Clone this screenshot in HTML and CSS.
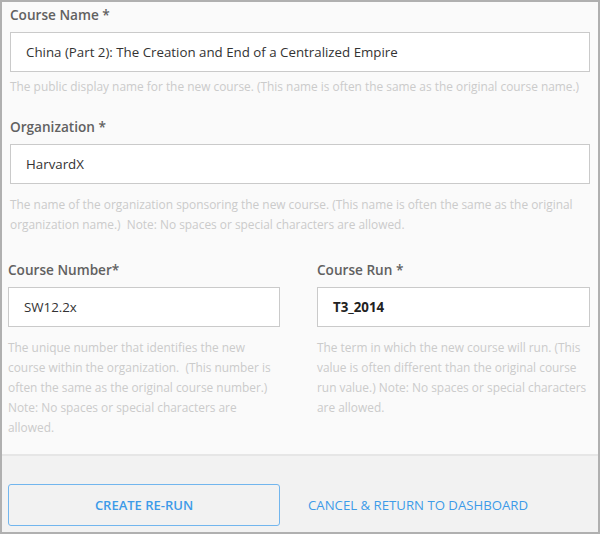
FILE: index.html
```html
<!DOCTYPE html>
<html lang="en">
<head>
<meta charset="utf-8">
<title>Course Re-run</title>
<link rel="stylesheet" href="styles.css">
</head>
<body>
<div class="frame">
  <form class="form">
    <div class="field">
      <label class="label">Course Name *</label>
      <div class="input">China (Part 2): The Creation and End of a Centralized Empire</div>
      <p class="help help-first">The public display name for the new course. (This name is often the same as the original course name.)</p>
    </div>
    <div class="field field-org">
      <label class="label">Organization *</label>
      <div class="input">HarvardX</div>
      <p class="help">The name of the organization sponsoring the new course. (This name is often the same as the original organization name.)&nbsp; Note: No spaces or special characters are allowed.</p>
    </div>
    <div class="row">
      <div class="field">
        <label class="label">Course Number*</label>
        <div class="input">SW12.2x</div>
        <p class="help">The unique number that identifies the new course within the organization.&nbsp; (This number is often the same as the original course number.)  Note: No spaces or special characters are allowed.</p>
      </div>
      <div class="field">
        <label class="label">Course Run *</label>
        <div class="input input-bold">T3_2014</div>
        <p class="help">The term in which the new course will run. (This value is often different than the original course run value.) Note: No spaces or special characters are allowed.</p>
      </div>
    </div>
  </form>
  <div class="footer">
    <button class="btn" type="button">CREATE RE-RUN</button>
    <a class="cancel" href="#">CANCEL &amp; RETURN TO DASHBOARD</a>
  </div>
</div>
</body>
</html>
```

FILE: styles.css
```css
* { box-sizing: border-box; }
html, body { margin: 0; padding: 0; }
body {
  font-family: "Open Sans", "Liberation Sans", sans-serif;
  background: #ffffff;
}
.frame {
  width: 600px;
  height: 534px;
  border: 2px solid #b0b0b0;
  background: #fafafa;
  display: flex;
  flex-direction: column;
}
.form {
  flex: 1;
  padding: 3px 8px 0 8px;
}
.field { display: flex; flex-direction: column; }
.field-org { margin-top: 21px; }
.label {
  font-size: 13.6px;
  font-weight: 600;
  line-height: 20px;
  color: #616161;
  margin-bottom: 7px;
}
.input {
  height: 40px;
  border: 1px solid #cacaca;
  background: #ffffff;
  padding: 0 15px;
  display: flex;
  align-items: center;
  font-size: 13.3px;
  color: #333333;
  white-space: nowrap;
}
.input-bold { font-weight: 700; color: #222222; }
.help {
  margin: 10px 0 0 0;
  font-size: 11.9px;
  line-height: 20px;
  color: #cbcbcb;
}
.help-first { margin-top: 4px; }
.row {
  margin: 26px 0 0 -2px;
  display: grid;
  grid-template-columns: 272px 1fr;
  column-gap: 37px;
}
.footer {
  height: 78px;
  border-top: 2px solid #e6e6e6;
  background: #f2f2f2;
  padding: 28px 0 6px 6px;
  display: flex;
  align-items: flex-start;
}
.btn {
  width: 272px;
  height: 42px;
  border: 1px solid #72b6ee;
  border-radius: 3px;
  background: transparent;
  font-family: inherit;
  font-size: 13px;
  font-weight: 600;
  color: #3d9be8;
  padding: 0;
}
.cancel {
  margin-left: 28px;
  line-height: 42px;
  font-size: 13.2px;
  color: #3d9be8;
  text-decoration: none;
}
```
